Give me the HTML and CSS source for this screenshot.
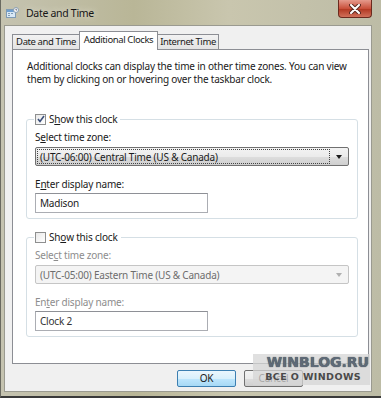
FILE: index.html
```html
<!DOCTYPE html>
<html>
<head>
<title>Date and Time</title>
<link rel="stylesheet" href="styles.css">
</head>
<body>
<div class="window">
	<div class="titlebar">
		<svg class="appicon" width="13" height="12" viewBox="0 0 13 12">
			<rect x="0.5" y="2.5" width="9" height="8" fill="#d9e8f5" stroke="#7f9bb5"/>
			<rect x="1" y="3" width="8" height="2" fill="#6f9fd0"/>
			<rect x="2" y="6" width="2" height="1" fill="#7f9bb5"/>
			<rect x="5" y="6" width="2" height="1" fill="#7f9bb5"/>
			<rect x="2" y="8" width="2" height="1" fill="#7f9bb5"/>
			<circle cx="10" cy="3" r="2.5" fill="#f4f4f4" stroke="#8aa0b3"/>
			<path d="M10 1.8V3H11" stroke="#445" stroke-width="0.7" fill="none"/>
		</svg>
		<span class="title">Date and Time</span>
		<div class="close">
			<svg width="12" height="10" viewBox="0 0 12 10">
				<path d="M2 1L10 9M10 1L2 9" stroke="#5a2a22" stroke-width="4" stroke-linecap="round"/>
				<path d="M2 1L10 9M10 1L2 9" stroke="#ffffff" stroke-width="2" stroke-linecap="round"/>
			</svg>
		</div>
	</div>

	<div class="client">
		<div class="tabs">
			<div class="tab">Date and Time</div>
			<div class="tab active">Additional Clocks</div>
			<div class="tab">Internet Time</div>
		</div>

		<div class="panel">
			<p class="intro">Additional clocks can display the time in other time zones. You can view them by clicking on or hovering over the taskbar clock.</p>

			<fieldset class="group first">
				<legend><span class="check on"><svg width="8" height="8" viewBox="0 0 8 8"><path d="M1 4L3 6.5L7 1" stroke="#3b4f7a" stroke-width="1.6" fill="none"/></svg></span>S<u>h</u>ow this clock</legend>
				<div class="label">S<u>e</u>lect time zone:</div>
				<div class="combo focus"><span class="combo-text">(UTC-06:00) Central Time (US &amp; Canada)</span><span class="arrow"></span></div>
				<div class="label gap">E<u>n</u>ter display name:</div>
				<div class="textbox">Madison</div>
			</fieldset>

			<fieldset class="group off">
				<legend><span class="check"></span>Sh<u>o</u>w this clock</legend>
				<div class="label">Sele<u>c</u>t time zone:</div>
				<div class="combo"><span class="combo-text">(UTC-05:00) Eastern Time (US &amp; Canada)</span><span class="arrow"></span></div>
				<div class="label gap">En<u>t</u>er display name:</div>
				<div class="textbox">Clock 2</div>
			</fieldset>
		</div>

		<div class="buttons">
			<div class="btn default">OK</div>
			<div class="btn">Cancel</div>
		</div>
	</div>

	<div class="watermark">
		<div class="wm-big">WINBLOG.RU</div>
		<div class="wm-small">ВСЕ О WINDOWS</div>
	</div>
</div>
</body>
</html>
```

FILE: styles.css
```css
body {
	margin: 0;
	background: #ffffff;
	font-family: "Noto Sans", "Liberation Sans", sans-serif;
	font-size: 10px;
	letter-spacing: -0.2px;
	color: #1a1a1a;
}
.window {
	position: relative;
	width: 381px;
	height: 398px;
	box-sizing: border-box;
	background: linear-gradient(90deg, #c5c3b0 0%, #b9b697 35%, #c9c6ae 60%, #bdbca6 100%);
	border-bottom: 2px solid #3a3a3a;
	border-left: 1px solid #6a6a60;
}
.titlebar {
	height: 25px;
	display: flex;
	align-items: center;
	padding-left: 5px;
}
.appicon {
	margin-top: 1px;
}
.title {
	margin-left: 7px;
	font-size: 10.5px;
	letter-spacing: -0.3px;
	color: #161616;
	text-shadow: 0 0 6px #e8e6d8;
}
.close {
	position: absolute;
	top: 0;
	right: 9px;
	width: 34px;
	height: 18px;
	box-sizing: border-box;
	border: 1px solid #6b2a1e;
	border-top: none;
	border-radius: 0 0 4px 4px;
	background: linear-gradient(#e59a8c, #c9503b 50%, #b33a24 55%, #d0705a);
	display: flex;
	align-items: center;
	justify-content: center;
}
.client {
	margin: 0 9px 0 3px;
	height: 367px;
	background: #f0f0f0;
	border: 1px solid #9a9a90;
	box-sizing: border-box;
}
.tabs {
	display: flex;
	align-items: flex-end;
	padding: 5px 0 0 7px;
	height: 18px;
	position: relative;
	z-index: 1;
}
.tab {
	height: 15px;
	line-height: 14px;
	box-sizing: border-box;
	border: 1px solid #8c8e94;
	border-bottom: none;
	background: linear-gradient(#f2f2f2, #e3e3e3);
	font-size: 9.5px;
	letter-spacing: -0.4px;
	text-align: center;
	white-space: nowrap;
	margin-right: -1px;
}
.tab:first-child {
	width: 68px;
}
.tab.active {
	height: 19px;
	width: 79px;
	line-height: 16px;
	background: #ffffff;
	margin-bottom: -1px;
	position: relative;
}
.tab:last-child {
	width: 62px;
}
.panel {
	margin: 0 2px 0 7px;
	height: 315px;
	box-sizing: border-box;
	background: #ffffff;
	border: 1px solid #8c8e94;
	padding: 0 10px 0 13px;
}
.intro {
	margin: 10px 0 0 1px;
	line-height: 13px;
	width: 330px;
}
.group {
	margin: 0;
	padding: 0 8px 5px 8px;
	border: 1px solid #d5dfe5;
	border-radius: 3px;
}
.group.first {
	margin-top: 27px;
}
.group.off {
	margin-top: 12px;
}
legend {
	padding: 0 3px 0 1px;
	margin-left: -1px;
	height: 12px;
	line-height: 12px;
	display: flex;
	align-items: center;
}
.check {
	width: 9px;
	height: 9px;
	border: 1px solid #8e8f8f;
	background: linear-gradient(135deg, #e9e9e9, #ffffff);
	margin-right: 3px;
	display: flex;
	align-items: center;
	justify-content: center;
}
.label {
	margin-top: 6px;
	line-height: 13px;
}
.label.gap {
	margin-top: 12px;
}
.off .label {
	color: #8d8d8d;
}
.combo {
	margin-top: 3px;
	height: 19px;
	box-sizing: border-box;
	border: 1px solid #707070;
	border-radius: 2px;
	background: linear-gradient(#f3f3f3, #ebebeb 50%, #dddddd 52%, #cfcfcf);
	display: flex;
	align-items: center;
	padding: 1px;
}
.combo-text {
	flex: 1;
	height: 15px;
	line-height: 14px;
	box-sizing: border-box;
	padding-left: 2px;
	border: 1px dotted #444;
}
.arrow {
	width: 0;
	height: 0;
	border-left: 3px solid transparent;
	border-right: 3px solid transparent;
	border-top: 4px solid #1a1a1a;
	margin: 1px 5px 0 6px;
}
.off .combo {
	border-color: #c5c5c5;
	background: #f4f4f4;
	color: #6d6d6d;
}
.off .combo-text {
	border-color: transparent;
}
.off .arrow {
	border-top-color: #b0b0b0;
}
.textbox {
	margin-top: 2px;
	width: 173px;
	height: 20px;
	box-sizing: border-box;
	border: 1px solid #abadb3;
	border-top-color: #8e9096;
	background: #ffffff;
	line-height: 18px;
	padding-left: 4px;
}
.off .textbox {
	color: #333333;
}
.buttons {
	display: flex;
	justify-content: flex-end;
	gap: 8px;
	padding: 6px 68px 0 0;
}
.btn {
	width: 59px;
	height: 17px;
	box-sizing: border-box;
	border: 1px solid #707070;
	border-radius: 2px;
	background: linear-gradient(#f2f2f2, #ebebeb 50%, #dddddd 52%, #cfcfcf);
	text-align: center;
	line-height: 15px;
}
.btn.default {
	border-color: #3c7fb1;
	background: linear-gradient(#eaf6fd, #d9f0fc 50%, #bee6fd 52%, #a7d9f5);
}
.watermark {
	position: absolute;
	left: 252px;
	top: 354px;
	width: 117px;
	height: 31px;
	background: rgba(214, 214, 214, 0.75);
	font-family: "DejaVu Sans", sans-serif;
	font-weight: bold;
	letter-spacing: 0;
	text-align: right;
	padding-right: 1px;
	box-sizing: border-box;
}
.wm-big {
	font-size: 14px;
	line-height: 17px;
	color: #5e6a78;
	text-shadow: 0 0 1px #333;
}
.wm-small {
	font-size: 9.5px;
	line-height: 12px;
	color: #4a4a4a;
	padding-right: 8px;
	letter-spacing: 0.4px;
}
```
